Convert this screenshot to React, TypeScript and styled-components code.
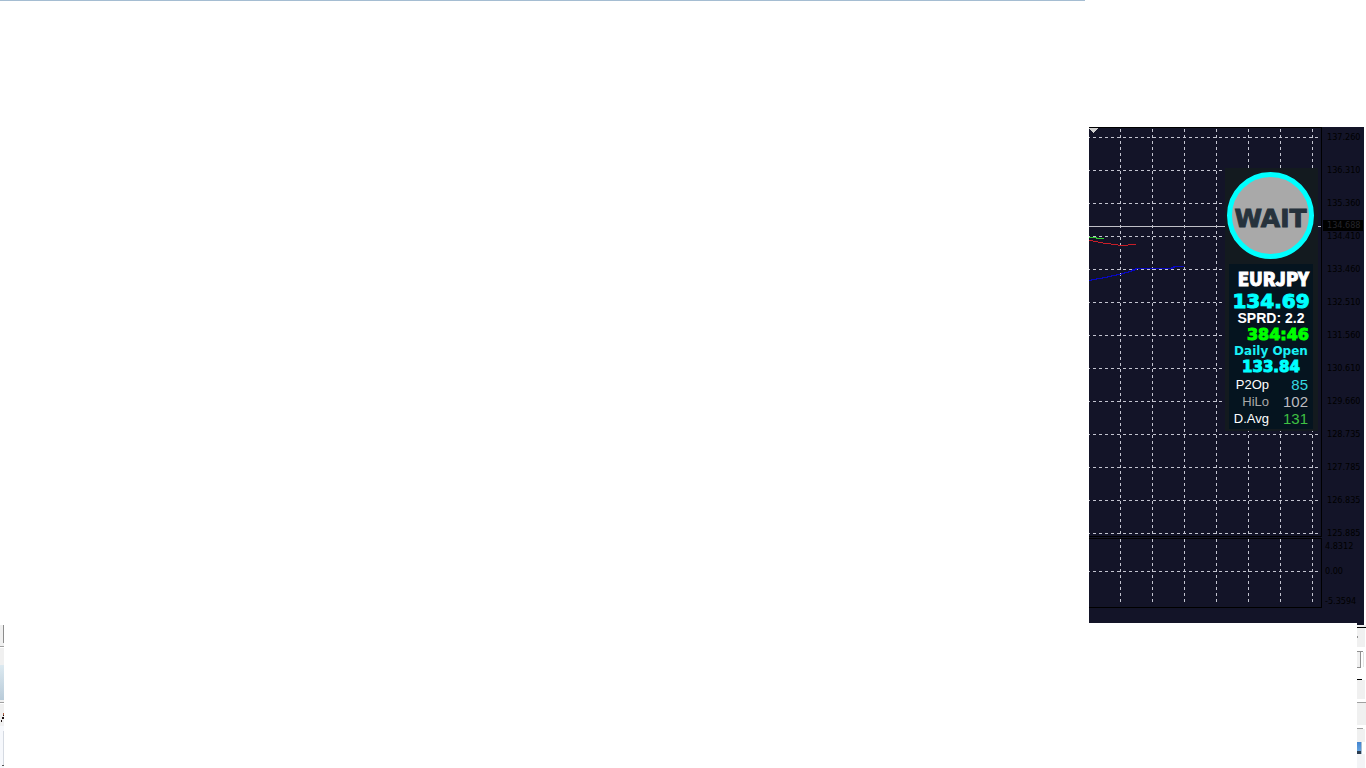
import React from "react";
import styled, { createGlobalStyle } from "styled-components";

const GlobalStyle = createGlobalStyle`
  *, *::before, *::after { box-sizing: border-box; }
  body { margin: 0; background: #fff; font-family: "Liberation Sans", Arial, sans-serif; }
`;

const Page = styled.div`
  display: flex;
  flex-direction: column;
  min-height: 100vh;
  background: #fff;
`;

const TopRule = styled.div`
  height: 1px;
  margin-right: 281px;
  background: #a5bdd2;
`;

const Workspace = styled.main`
  display: flex;
  justify-content: flex-end;
  padding: 126px 2px 0 0;
`;

const Chart = styled.section`
  position: relative;
  display: flex;
  background: #131428;
`;

const Plot = styled.svg`
  display: block;
  flex: none;
`;

const Axis = styled.div`
  display: flex;
  flex-direction: column;
  width: 42px;
  color: #000;
  font: 9px/20px "DejaVu Sans Condensed", "DejaVu Sans", sans-serif;
`;

const Scale = styled.ul<{ $inset: number }>`
  list-style: none;
  margin: 0;
  padding: 0 0 0 ${(p) => p.$inset}px;
`;

const Tick = styled.li<{ $height: number }>`
  height: ${(p) => p.$height}px;
`;

const CurrentPrice = styled.div`
  position: absolute;
  top: 93px;
  right: 1px;
  width: 40px;
  padding-left: 4px;
  background: #000;
  color: #26262c;
  font: 9px/11px "DejaVu Sans Condensed", "DejaVu Sans", sans-serif;
`;

const Overlay = styled.aside`
  position: absolute;
  top: 41px;
  right: 46px;
  width: 93px;
  padding: 4px 5px 2px 4px;
  background: #131a1f;
`;

const Signal = styled.div`
  display: flex;
  align-items: center;
  justify-content: center;
  width: 87px;
  height: 87px;
  margin: 0 -2px 5px;
  border: 5px solid #00ffff;
  border-radius: 50%;
  background: #a9a9a9;
  color: #26323c;
  font: bold 25px/30px "DejaVu Sans", sans-serif;
  -webkit-text-stroke: 1px #26323c;
  padding-top: 6px;
`;

const Quote = styled.div`
  padding-bottom: 2px;
  background: #05141f;
`;

const faces = {
  narrow: '"Noto Sans CJK JP", "Liberation Sans", sans-serif',
  plain: '"Liberation Sans", sans-serif',
  wide: '"DejaVu Sans", sans-serif',
};

const Line = styled.div<{
  $size: number;
  $height: number;
  $color: string;
  $right?: boolean;
  $heavy?: boolean;
  $face?: keyof typeof faces;
}>`
  display: flex;
  justify-content: ${(p) => (p.$right ? "flex-end" : "center")};
  height: ${(p) => p.$height}px;
  padding-right: ${(p) => (p.$right ? 4 : 0)}px;
  color: ${(p) => p.$color};
  font-family: ${(p) => faces[p.$face ?? "wide"]};
  font-weight: 900;
  font-size: ${(p) => p.$size}px;
  line-height: ${(p) => p.$height}px;
  white-space: nowrap;
  -webkit-text-stroke: ${(p) => (p.$heavy ? 1 : 0)}px ${(p) => p.$color};
`;

const Stats = styled.table`
  width: 100%;
  border-collapse: collapse;
  line-height: 17px;
`;

const StatName = styled.th<{ $color: string }>`
  width: 40px;
  padding: 0;
  color: ${(p) => p.$color};
  font-size: 13px;
  font-weight: normal;
  text-align: right;
`;

const StatValue = styled.td<{ $color: string }>`
  height: 17px;
  padding: 0 5px 0 0;
  color: ${(p) => p.$color};
  font-size: 15px;
  text-align: right;
`;

const Footer = styled.footer`
  display: flex;
  flex: 1;
  justify-content: space-between;
`;

const Edge = styled.div<{ $width: number }>`
  display: flex;
  flex-direction: column;
  width: ${(p) => p.$width}px;
  overflow: hidden;
`;

const Strip = styled.div<{ $height: number; $fill: string; $side?: string; $inset?: number }>`
  height: ${(p) => p.$height}px;
  margin-right: ${(p) => p.$inset ?? 0}px;
  background: ${(p) => p.$fill};
  border-right: ${(p) => (p.$side ? `1px solid ${p.$side}` : "none")};
`;

type Band = { h: number; fill: string; side?: string; inset?: number };

const leftBands: Band[] = [
  { h: 2, fill: "#fff" },
  { h: 18, fill: "#f0f0f0", side: "#8c8c8c" },
  { h: 3, fill: "#f0f0f0" },
  { h: 1, fill: "#a0a0a0" },
  { h: 1, fill: "#fff" },
  { h: 17, fill: "#f0f0f0" },
  { h: 35, fill: "linear-gradient(#dce9f0, #b9cbd9)" },
  { h: 2, fill: "#f0f0f0" },
  { h: 1, fill: "#a0a0a0" },
  { h: 1, fill: "#fff" },
];

const rightBands: Band[] = [
  { h: 2, fill: "#131428", inset: 2 },
  { h: 2, fill: "#f0f0f0" },
  { h: 1, fill: "#000" },
  { h: 8, fill: "#f0f0f0", side: "#fff" },
  { h: 2, fill: "linear-gradient(90deg, #909090 1px, #f0f0f0 1px)", side: "#fff" },
  { h: 9, fill: "#f0f0f0", side: "#fff" },
  { h: 4, fill: "#fff" },
  { h: 1, fill: "#909090", inset: 3 },
  { h: 15, fill: "linear-gradient(90deg, #f0f0f0 3px, #909090 3px, #909090 4px, #fff 4px)", side: "#e4e4e4", inset: 2 },
  { h: 1, fill: "#909090", inset: 5 },
  { h: 11, fill: "#fff" },
  { h: 1, fill: "#000", inset: 4 },
  { h: 19, fill: "#f0f0f0", side: "#fff" },
  { h: 3, fill: "#fff" },
  { h: 1, fill: "#a0a0a0" },
  { h: 22, fill: "#f0f0f0" },
  { h: 3, fill: "#fff" },
  { h: 1, fill: "#a0a0a0", inset: 3 },
  { h: 13, fill: "#f0f0f0", side: "#fff" },
  { h: 9, fill: "linear-gradient(#4384cf, #64a3e0)", side: "#aebfd0", inset: 4 },
  { h: 3, fill: "#2c3d50", side: "#aebfd0", inset: 4 },
  { h: 14, fill: "#f3f4f6", side: "#fff" },
];

const prices = [
  "137.260", "136.310", "135.360", "134.410", "133.460", "132.510", "131.560",
  "130.610", "129.660", "128.735", "127.785", "126.835", "125.885",
];

const indicator = [
  { label: "4.8312", h: 25 },
  { label: "0.00", h: 30 },
  { label: "-5.3594", h: 20 },
];

const columns = [31, 63, 95, 127, 159, 191, 223];

const stats = [
  { name: "P2Op", value: "85", nameColor: "#ffffff", color: "#35d9e2" },
  { name: "HiLo", value: "102", nameColor: "#a9a9a9", color: "#bcbcc0" },
  { name: "D.Avg", value: "131", nameColor: "#ffffff", color: "#3fc143" },
];

function Bands({ items }: { items: Band[] }) {
  return (
    <>
      {items.map((b, i) => (
        <Strip key={i} $height={b.h} $fill={b.fill} $side={b.side} $inset={b.inset} />
      ))}
    </>
  );
}

function PricePlot() {
  return (
    <Plot width="233" height="496" viewBox="0 0 233 496" shapeRendering="crispEdges" aria-hidden="true">
      <g stroke="#c3c4d0" strokeDasharray="3 3">
        {prices.map((p, i) => (
          <path key={p} d={`M0 ${10.5 + i * 33}H231`} strokeDashoffset="2" />
        ))}
        <path d="M0 444.5H231" strokeDashoffset="2" />
        {columns.map((x) => (
          <path key={x} d={`M${x + 0.5} 2V409M${x + 0.5} 412V478`} />
        ))}
      </g>
      <path d="M0 99.5H232" stroke="#c0c0c8" />
      <g stroke="#000" fill="none">
        <path d="M0 .5H232.5V409.5H0M0 411.5H232.5V480.5H0" />
      </g>
      <path d="M0 1H9L4.5 6Z" fill="#d0d0d0" />
      <g fill="none" strokeWidth="1">
        <path d="M0 110.5H8M7 111.5H15" stroke="#32cd32" />
        <path d="M0 113.5H4M4 114.5H9M9 115.5H14M14 116.5H22M22 117.5H29M29 118.5H39M39 117.5H47" stroke="#c81e28" />
        <path d="M0 153.5H3M2 152.5H8M7 151.5H14M13 150.5H19M18 149.5H23M22 148.5H28M27 147.5H33M32 146.5H36M35 145.5H40M39 144.5H43M42 143.5H46M43 142.5H48M46 141.5H84M82 140.5H86M84 139.5H95" stroke="#0808c0" />
      </g>
    </Plot>
  );
}

export default function App() {
  return (
    <Page>
      <GlobalStyle />
      <TopRule />
      <Workspace>
        <Chart aria-label="EURJPY chart">
          <PricePlot />
          <Axis>
            <Scale $inset={5}>
              {prices.map((p, i) => (
                <Tick key={p} $height={i === prices.length - 1 ? 13 : 33}>{p}</Tick>
              ))}
            </Scale>
            <Scale $inset={3}>
              {indicator.map((t) => (
                <Tick key={t.label} $height={t.h}>{t.label}</Tick>
              ))}
            </Scale>
          </Axis>
          <CurrentPrice>134.688</CurrentPrice>
          <Overlay>
            <Signal>WAIT</Signal>
            <Quote>
              <Line $size={18} $height={28} $color="#ffffff" $right $heavy $face="narrow">EURJPY</Line>
              <Line $size={20} $height={18} $color="#00ffff" $heavy>134.69</Line>
              <Line $size={14} $height={16} $color="#ffffff" $face="plain">SPRD: 2.2</Line>
              <Line $size={16} $height={18} $color="#00ff00" $right $heavy>384:46</Line>
              <Line $size={12} $height={14} $color="#19f0f5">Daily Open</Line>
              <Line $size={15} $height={18} $color="#00ffff" $heavy>133.84</Line>
              <Stats>
                <tbody>
                  {stats.map((s) => (
                    <tr key={s.name}>
                      <StatName scope="row" $color={s.nameColor}>{s.name}</StatName>
                      <StatValue $color={s.color}>{s.value}</StatValue>
                    </tr>
                  ))}
                </tbody>
              </Stats>
            </Quote>
          </Overlay>
        </Chart>
      </Workspace>
      <Footer>
        <Edge $width={4}>
          <Bands items={leftBands} />
          <svg width="4" height="64" viewBox="0 0 4 64" shapeRendering="crispEdges" aria-hidden="true">
            <rect width="4" height="22" fill="#f0f0f0" />
            <path d="M2 16v-3h1v-3h1v2H3v2H2zM1 16h1v2H1zM2 13h2v2H2z" fill="#1c1010" />
            <path d="M3 9h1v2H3z" fill="#b06040" />
            <rect y="22" width="4" height="42" fill="#f6f8fc" />
            <path d="M3.5 27V62" stroke="#d5dae2" />
            <path d="M2 61.5h2" stroke="#555" />
          </svg>
        </Edge>
        <Edge $width={9}>
          <Bands items={rightBands} />
        </Edge>
      </Footer>
    </Page>
  );
}
